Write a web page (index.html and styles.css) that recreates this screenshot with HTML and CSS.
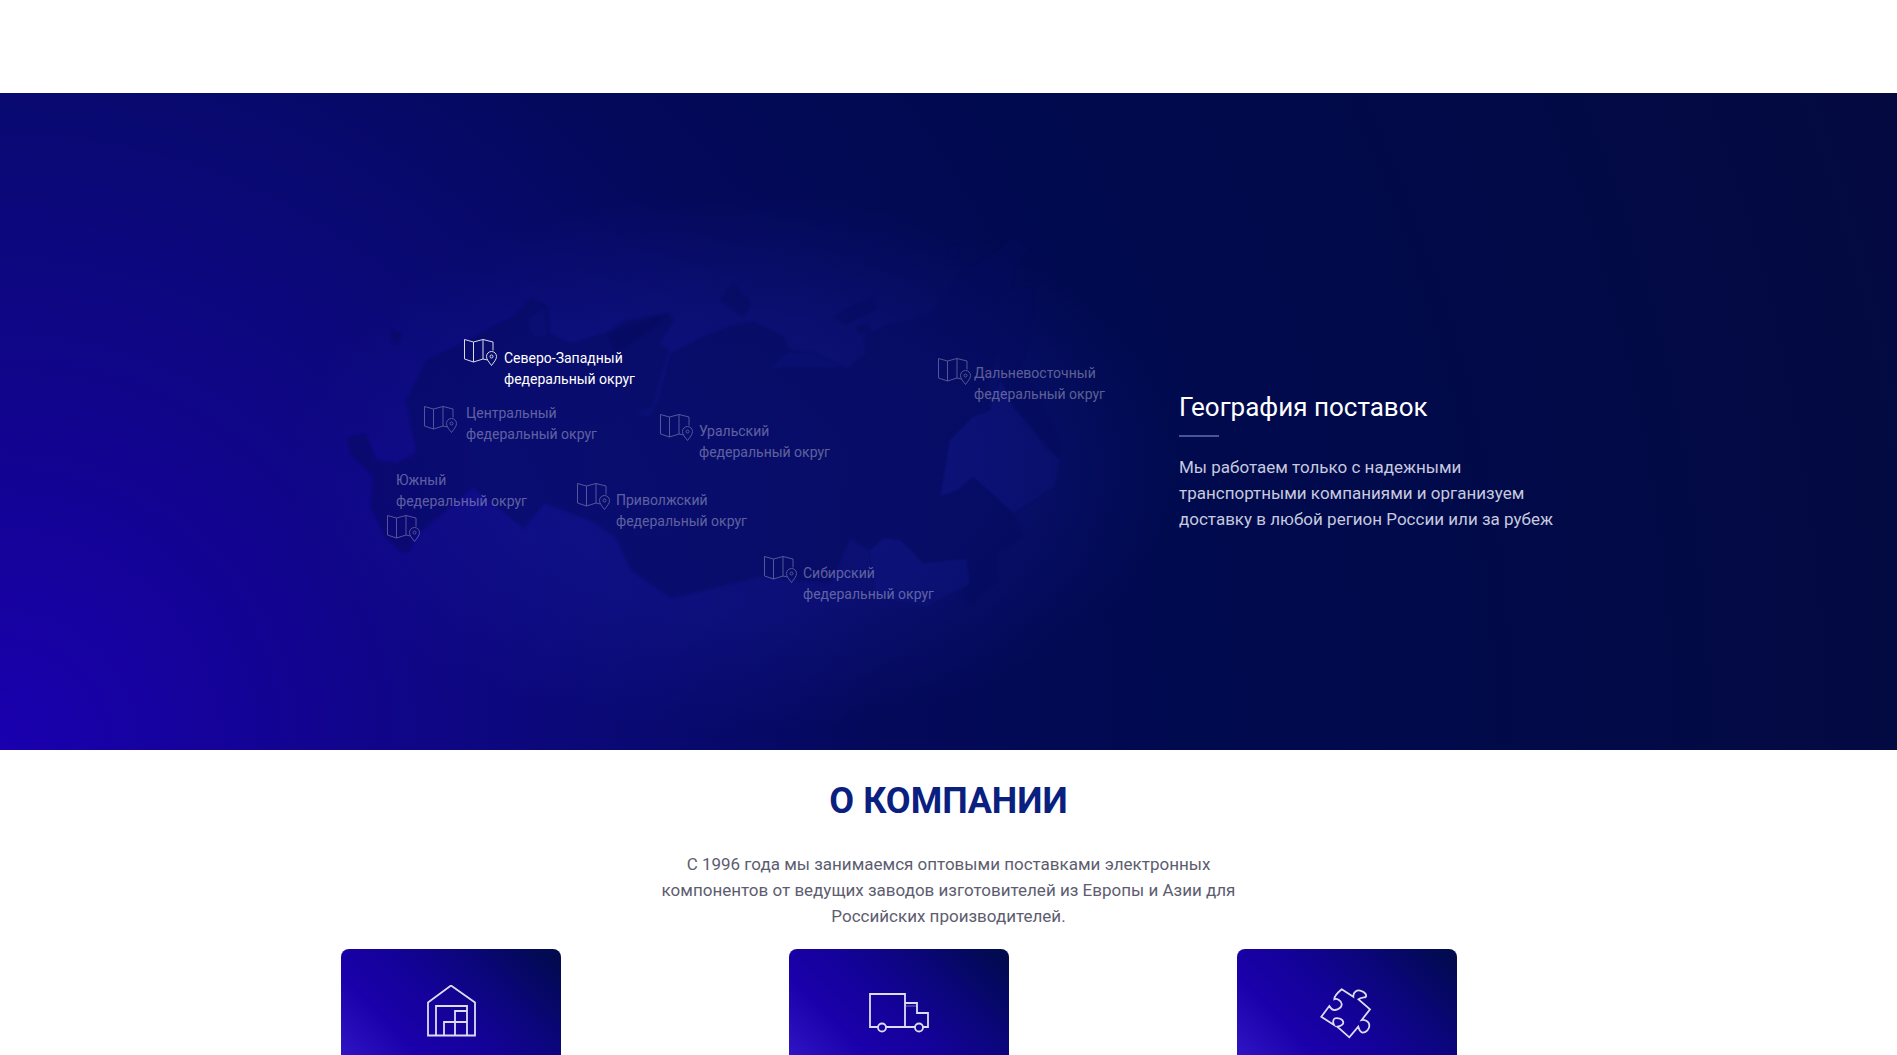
FILE: index.html
```html
<!DOCTYPE html>
<html lang="ru">
<head>
<meta charset="utf-8">
<title>География поставок</title>
<link rel="stylesheet" href="styles.css">
</head>
<body>
<div class="page">
  <div class="topbar"></div>
  <section class="hero">
    <div class="geo-map">
      <div class="geo-glow"></div>
      <svg class="land" viewBox="0 0 1568 1260" preserveAspectRatio="none" aria-hidden="true">
        <path class="land-main" d="M120 995 L90 950 L60 860 L65 770 L20 700 L15 650 L50 640 L70 720 L110 730 L150 700 L130 540 L170 420 L240 370 L300 320 L340 290 L375 235 L410 260 L410 340 L450 370 L520 340 L560 300 L640 280 L655 300 L625 370 L650 400 L700 360 L760 320 L810 305 L870 350 L880 390 L930 400 L993 445 L1032 400 L1026 350 L1065 320 L1117 300 L1169 270 L1199 205 L1222 150 L1293 90 L1320 50 L1352 90 L1320 150 L1316 205 L1359 205 L1355 350 L1339 410 L1333 440 L1404 640 L1411 720 L1380 680 L1320 560 L1296 480 L1293 385 L1270 480 L1274 570 L1241 590 L1195 660 L1176 830 L1212 810 L1241 770 L1320 880 L1339 950 L1287 1000 L1290 1080 L1235 1150 L1215 1120 L1235 1090 L1228 1015 L1143 1030 L1098 960 L1065 955 L1039 990 L1000 955 L960 1090 L820 1070 L650 1135 L570 1050 L540 950 L490 900 L400 850 L360 925 L260 800 L210 870 L150 945 L135 995 Z"/>
        <path class="land-main" d="M970 290 L1000 262 L1045 235 L1050 265 L990 315 Z"/>
        <path class="land-main" d="M1010 320 L1035 310 L1040 340 L1015 340 Z"/>
        <path class="land-main" d="M1190 85 L1215 75 L1212 105 L1195 115 Z"/>
        <path class="land-main" d="M770 190 L805 250 L790 290 L745 240 Z"/>
        <path class="land-main" d="M100 330 L120 340 L115 375 L100 360 Z"/>
        <path class="land-main" d="M525 340 L650 275 L590 350 L540 400 Z"/>
        <path class="land-sea" d="M1195 660 L1241 590 L1274 570 L1296 480 L1320 560 L1411 720 L1400 800 L1320 880 L1241 770 L1212 810 L1176 830 Z"/>
        <path class="land-sea" d="M1039 990 L1065 955 L1098 960 L1143 1030 L1228 1015 L1235 1090 L1150 1160 L1050 1130 Z"/>
        <path class="land-sea" d="M575 580 L610 560 L640 400 L650 395 L625 540 L605 590 Z"/>
        <path class="land-sea" d="M880 395 L930 405 L993 445 L1020 410 L1000 440 L840 445 Z"/>
        <path class="land-sea" d="M365 300 L400 265 L405 345 L380 355 Z"/>
      </svg>
      <div class="node node-nw is-active">
        <svg class="node-icon"><use href="#map-pin"/></svg>
        <div class="node-label">Северо-Западный<br>федеральный округ</div>
      </div>
      <div class="node node-central">
        <svg class="node-icon"><use href="#map-pin"/></svg>
        <div class="node-label">Центральный<br>федеральный округ</div>
      </div>
      <div class="node node-ural">
        <svg class="node-icon"><use href="#map-pin"/></svg>
        <div class="node-label">Уральский<br>федеральный округ</div>
      </div>
      <div class="node node-south">
        <div class="node-label">Южный<br>федеральный округ</div>
        <svg class="node-icon"><use href="#map-pin"/></svg>
      </div>
      <div class="node node-volga">
        <svg class="node-icon"><use href="#map-pin"/></svg>
        <div class="node-label">Приволжский<br>федеральный округ</div>
      </div>
      <div class="node node-siberia">
        <svg class="node-icon"><use href="#map-pin"/></svg>
        <div class="node-label">Сибирский<br>федеральный округ</div>
      </div>
      <div class="node node-far">
        <svg class="node-icon"><use href="#map-pin"/></svg>
        <div class="node-label">Дальневосточный<br>федеральный округ</div>
      </div>
    </div>
    <div class="geo-text">
      <h2 class="geo-title">География поставок</h2>
      <div class="geo-rule"></div>
      <p class="geo-desc">Мы работаем только с надежными<br>транспортными компаниями и организуем<br>доставку в любой регион России или за рубеж</p>
    </div>
  </section>
  <section class="about">
    <h2 class="about-title">О КОМПАНИИ</h2>
    <p class="about-desc">С 1996 года мы занимаемся оптовыми поставками электронных<br>компонентов от ведущих заводов изготовителей из Европы и Азии для<br>Российских производителей.</p>
    <div class="cards">
      <div class="card">
        <svg class="card-icon" viewBox="0 0 60 60" aria-hidden="true">
          <path d="M7 50.500V17.500L30 0.500 L54 17.500V50.500Z"/>
          <path d="M15 50.500V21H46V50.500"/>
          <path d="M34 37V26H46"/>
          <path d="M23 50.500V37H46M34 37V50.500"/>
        </svg>
      </div>
      <div class="card">
        <svg class="card-icon" viewBox="0 0 60 60" aria-hidden="true">
          <path d="M9 42H1V9H36V42H17"/>
          <path d="M36 18H48V28H59V42H54M46 42H36"/>
          <path d="M36 21H48" class="thin"/>
          <circle cx="13" cy="42.500" r="4"/>
          <circle cx="50" cy="42.500" r="4"/>
        </svg>
      </div>
      <div class="card">
        <svg class="card-icon" viewBox="0 0 60 60" aria-hidden="true">
          <path d="M24.700 4.300 L36.300 11.700 C36 7 40 4.500 44 5.800 C48 7 50 10 48.700 12 C46 12.500 43 12.500 41.300 14.300 L53 24.300 L44.700 35 C47 34.500 52 36 52.300 40 C52.800 44 49 47.500 45.500 47.700 C43 47 42 44 41.300 41.700 L32.300 52.300 L20.300 41.700 C23 41 26.500 40 26.300 37.500 C26 34 21 32.500 18 33.300 C15.500 34.500 16 38 17 40 L4.300 31.700 L12.300 21 C13.500 23 15.500 25.500 18 25 C21.500 24.500 25 22 24.700 19 C24.500 16 20 13 17.300 14.300 C17 11 21.500 7 24.700 4.300Z"/>
        </svg>
      </div>
    </div>
  </section>
</div>
<svg class="sprite" aria-hidden="true">
  <symbol id="map-pin" viewBox="0 0 33 27">
    <path d="M23.500 21 L19 20 L9.500 23 L0.500 20 V0.500 L9.500 3 L19 0.500 L29 3 V11.500"/>
    <path d="M9.500 3 V23 M19 0.500 V20"/>
    <path d="M27.500 26.500 C25 23 22.500 20.500 22.500 17.500 A5 5 0 0 1 32.500 17.500 C32.500 20.500 30 23 27.500 26.500Z"/>
    <circle cx="27.500" cy="17.500" r="1.500"/>
  </symbol>
</svg>
</body>
</html>
```
FILE: styles.css
```css
* { box-sizing: border-box; }
html, body { margin: 0; padding: 0; height: 100%; overflow: hidden; background: #fff; }
body { font-family: Roboto, "Liberation Sans", sans-serif; }

.page { height: 1055px; overflow: hidden; }
.topbar { height: 93px; background: #fff; }

.hero {
  position: relative;
  height: 657px;
  padding: 297px 0 0 1179px;
  background: radial-gradient(circle at 0% 100%, #1a00b0 0, #12048f 320px, #0a0976 600px, #04095a 880px, #000a4e 1200px, #020a48 1600px, #040a40 100%);
  overflow: hidden;
}

.geo-map { position: absolute; inset: 0; }
.geo-glow {
  position: absolute;
  left: 290px;
  top: 100px;
  width: 890px;
  height: 540px;
  background: radial-gradient(ellipse closest-side, rgba(24, 28, 160, 0.4) 0, rgba(24, 28, 160, 0.32) 55%, rgba(24, 28, 160, 0) 100%);
}
.land { position: absolute; left: 340px; top: 127px; width: 800px; height: 420px; filter: blur(1px); }
.land-main { fill: #03095c; fill-opacity: 0.5; }
.land-sea { fill: #1a20a0; fill-opacity: 0.16; }

.node { position: absolute; display: flex; align-items: flex-start; gap: var(--gap, 7px); }
.node-icon { flex: none; width: 33px; height: 27px; fill: none; stroke: #fff; stroke-width: 1; opacity: 0.3; }
.node-label { margin-top: var(--dy, 0); font-size: 14px; line-height: 21px; white-space: nowrap; color: rgba(255, 255, 255, 0.36); }
.is-active .node-icon { opacity: 0.85; }
.is-active .node-label { color: #fff; }

.node-nw { left: 464px; top: 246px; --gap: 7px; --dy: 9px; }
.node-central { left: 424px; top: 313px; --gap: 9px; --dy: -3px; }
.node-ural { left: 660px; top: 321px; --gap: 6px; --dy: 7px; }
.node-south { left: 387px; top: 377px; flex-direction: column; gap: 3px; }
.node-south .node-label { margin-left: 9px; }
.node-volga { left: 577px; top: 390px; --gap: 6px; --dy: 7px; }
.node-siberia { left: 764px; top: 463px; --gap: 6px; --dy: 7px; }
.node-far { left: 938px; top: 265px; --gap: 3px; --dy: 5px; }

.geo-text { position: relative; }
.geo-title { margin: 0; font-size: 26px; line-height: 34px; font-weight: 400; color: #fff; }
.geo-rule { width: 40px; height: 2px; margin: 11px 0 17px; background: #4a5596; }
.geo-desc { margin: 0; font-size: 17px; line-height: 26px; color: #c6c9df; white-space: nowrap; }

.about { display: flex; flex-direction: column; align-items: center; }
.about-title { margin: 29px 0 0; font-size: 36px; line-height: 44px; font-weight: 700; color: #0a2080; }
.about-desc { margin: 28px 0 0; font-size: 17px; line-height: 26px; text-align: center; color: #5d5d70; white-space: nowrap; }
.cards { display: flex; justify-content: space-between; align-self: flex-start; width: 1116px; margin: 20px 0 0 341px; }
.card {
  flex: none;
  width: 220px;
  height: 120px;
  padding-top: 36px;
  display: flex;
  justify-content: center;
  align-items: flex-start;
  border-radius: 8px;
  background: linear-gradient(45deg, #3318c8 0%, #1a00aa 28%, #14029a 48%, #0a0678 72%, #000b48 100%);
}
.card-icon { flex: none; width: 60px; height: 60px; fill: none; stroke: #dedcf2; stroke-width: 1.800; }
.card-icon .thin { stroke-width: 1; opacity: .5; }
.sprite { position: absolute; width: 0; height: 0; }
```
